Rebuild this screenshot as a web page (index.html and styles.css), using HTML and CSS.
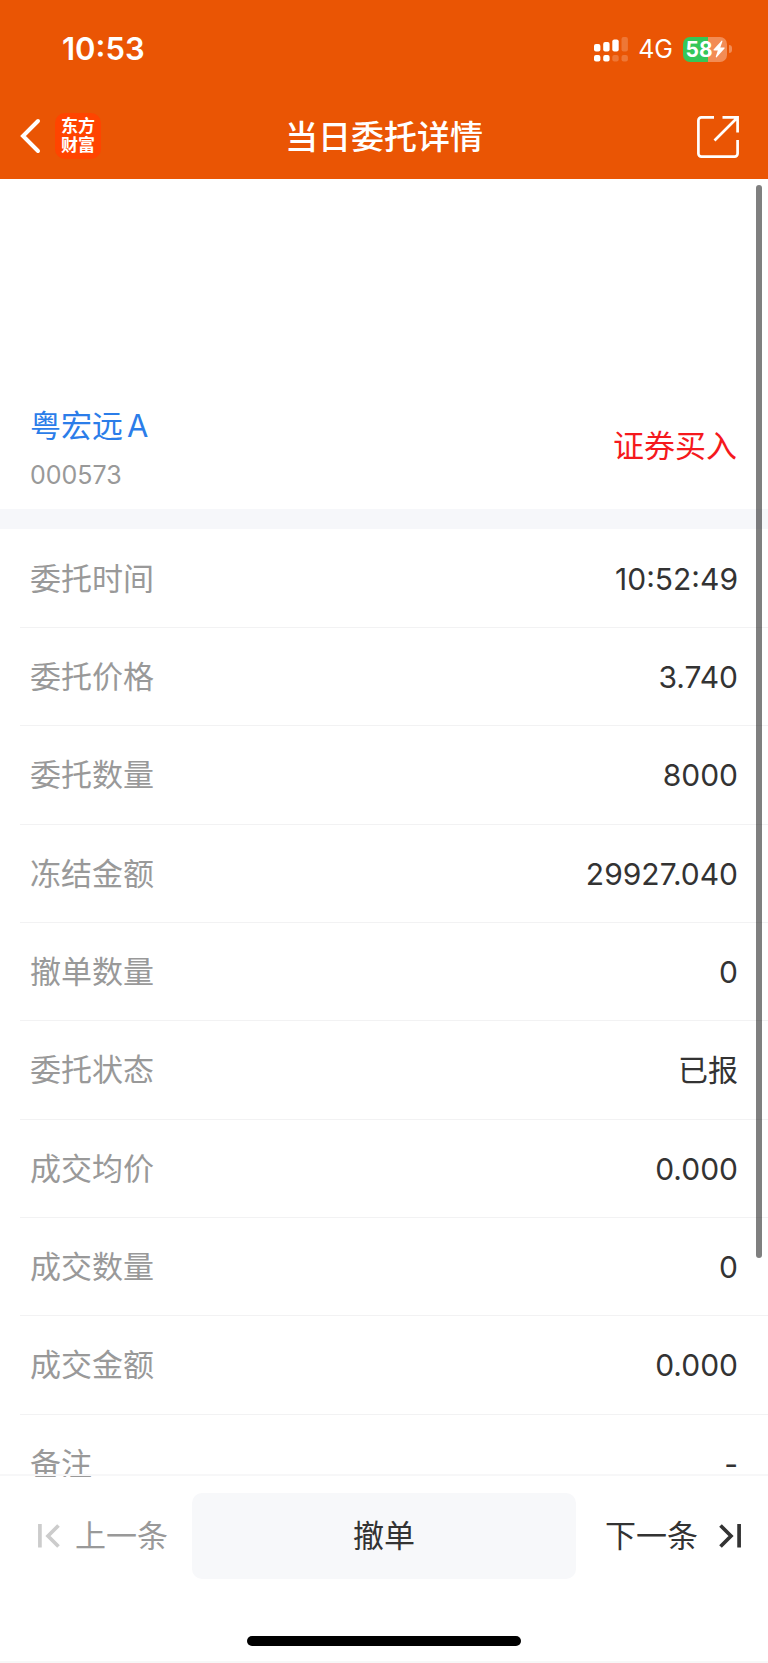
FILE: index.html
```html
<!DOCTYPE html>
<html lang="zh-CN">
<head>
<meta charset="utf-8">
<meta name="viewport" content="width=device-width, initial-scale=1">
<title>当日委托详情</title>
<link rel="stylesheet" href="styles.css">
</head>
<body>
<header class="header">
  <div class="status">
    <time class="clock">10:53</time>
    <div class="status-right">
      <svg class="signal" width="34" height="25" viewBox="0 0 34 25" fill="#fff" aria-hidden="true">
        <rect x="0" y="7" width="6.4" height="7.5" rx="2"/><rect x="9.2" y="5" width="6.4" height="9.5" rx="2"/><rect x="18.3" y="2.5" width="6.4" height="12" rx="2"/><rect x="27.5" y="0" width="6.4" height="14.5" rx="2" opacity=".2"/>
        <rect x="0" y="18" width="6.4" height="6.4" rx="2"/><rect x="9.2" y="18" width="6.4" height="6.4" rx="2"/><rect x="18.3" y="18" width="6.4" height="6.4" rx="2" opacity=".2"/><rect x="27.5" y="18" width="6.4" height="6.4" rx="2" opacity=".2"/>
      </svg>
      <span class="network">4G</span>
      <span class="battery">
        <span class="cell"><span class="level">58</span><svg width="12" height="18" viewBox="0 0 12 18" fill="#fff" aria-hidden="true"><path d="M8.6.8.6 9.6c-.3.4-.1.8.3.8h3.9L2.8 16.600c-.2.8.4 1.100.9.6l7.800-8.800c.3-.4.1-.9-.4-.9H7.300l2.100-6c.2-.7-.4-1.200-.8-.7Z"/></svg></span>
        <span class="nub"></span>
      </span>
    </div>
  </div>
  <nav class="navbar">
    <div class="nav-left">
      <button class="icon-btn" aria-label="返回"><svg width="22" height="36" viewBox="0 0 22 36" fill="none" stroke="#fff" stroke-width="4" stroke-linecap="round" stroke-linejoin="miter" aria-hidden="true"><path d="M19 3 4 18l15 15"/></svg></button>
      <span class="logo"><span>东方</span><span>财富</span></span>
    </div>
    <h1 class="title">当日委托详情</h1>
    <button class="icon-btn share" aria-label="分享"><svg width="42" height="42" viewBox="0 0 42 42" fill="none" stroke="#fff" stroke-width="2.700" aria-hidden="true"><path d="M17 1.400H4.400a3 3 0 0 0-3 3v33.200a3 3 0 0 0 3 3h33.200a3 3 0 0 0 3-3V24M25.500 1.400h15.100V16.500M40 2 17.500 24.500"/></svg></button>
  </nav>
</header>
<main class="content">
  <section class="stock">
    <div>
      <a class="stock-name" href="#"><span>粤宏远</span> <span>A</span></a>
      <p class="stock-code">000573</p>
    </div>
    <strong class="side">证券买入</strong>
  </section>
  <dl class="details">
    <div class="row"><dt>委托时间</dt><dd>10:52:49</dd></div>
    <div class="row"><dt>委托价格</dt><dd>3.740</dd></div>
    <div class="row"><dt>委托数量</dt><dd>8000</dd></div>
    <div class="row"><dt>冻结金额</dt><dd>29927.040</dd></div>
    <div class="row"><dt>撤单数量</dt><dd>0</dd></div>
    <div class="row"><dt>委托状态</dt><dd>已报</dd></div>
    <div class="row"><dt>成交均价</dt><dd>0.000</dd></div>
    <div class="row"><dt>成交数量</dt><dd>0</dd></div>
    <div class="row"><dt>成交金额</dt><dd>0.000</dd></div>
    <div class="row"><dt>备注</dt><dd>-</dd></div>
  </dl>
  <div class="scrollbar"></div>
</main>
<footer class="footer">
  <div class="actions">
    <button class="step" disabled><svg width="22" height="24" viewBox="0 0 22 24" fill="none" stroke="#ccc" stroke-width="3.700" aria-hidden="true"><path d="M1.900 0v23.500M20.500 1.500 10 12l10.500 10.500"/></svg><span>上一条</span></button>
    <button class="cancel">撤单</button>
    <button class="step next"><span>下一条</span><svg width="22" height="24" viewBox="0 0 22 24" fill="none" stroke="#333" stroke-width="3.700" aria-hidden="true"><path d="M20.100 0v23.500M1.500 1.500 12 12 1.500 22.500"/></svg></button>
  </div>
  <div class="home"></div>
</footer>
</body>
</html>
```
FILE: styles.css
```css
* { box-sizing: border-box; margin: 0; padding: 0; }
body {
  display: flex;
  flex-direction: column;
  height: 100vh;
  background: #fff;
  color: #333;
  font-family: Inter, "Noto Sans CJK SC", sans-serif;
  font-size: 31px;
  line-height: 44px;
}
button { border: 0; background: none; font: inherit; color: inherit; cursor: pointer; }
svg { display: block; flex: none; }

.header { flex: none; background: #ea5504; color: #fff; }
.status {
  display: flex;
  justify-content: space-between;
  align-items: center;
  padding: 27px 36px 21px 62px;
}
.clock { font-weight: 600; }
.status-right { display: flex; align-items: center; }
.network { margin: 0 10px; font-size: 25px; }
.battery { display: flex; align-items: center; gap: 2px; }
.cell {
  display: flex;
  align-items: center;
  justify-content: center;
  width: 44px;
  height: 25px;
  border-radius: 7px;
  background: linear-gradient(to right, #34c759 57%, #f28c55 57%);
}
.level { font-size: 21px; font-weight: 700; line-height: 25px; }
.nub { width: 3px; height: 8px; border-radius: 0 4px 4px 0; background: #f28c55; }

.navbar {
  display: grid;
  grid-template-columns: 1fr auto 1fr;
  align-items: center;
  height: 87px;
  padding: 0 19px;
}
.nav-left { display: flex; align-items: center; gap: 14px; }
.icon-btn { display: block; }
.share { justify-self: end; padding: 2px 10px 0 0; }
.logo {
  display: flex;
  flex-direction: column;
  align-items: center;
  justify-content: center;
  width: 46px;
  height: 46px;
  border-radius: 10px;
  background: #ff4400;
  font-size: 17px;
  font-weight: 700;
  line-height: 19px;
}
.title { padding-top: 2px; font-size: 33px; font-weight: 500; }

.content { position: relative; flex: 1; min-height: 0; overflow: hidden; }
.stock {
  display: flex;
  justify-content: space-between;
  align-items: center;
  padding: 225px 31px 12px 30px;
}
.stock-name { display: flex; gap: 4px; color: #2b7de9; text-decoration: none; }
.stock-code { margin-top: 5px; color: #999; font-size: 25px; }
.side { margin-bottom: 10px; color: #f5191d; font-weight: 400; }

.details { padding-top: 1px; border-top: 20px solid #f6f7fa; }
.row {
  display: flex;
  justify-content: space-between;
  align-items: center;
  height: 98px;
  margin-left: 20px;
  padding: 0 30px 0 10px;
  border-bottom: 1px solid #f2f2f3;
}
.row:nth-child(3n) { height: 99px; }
dt { color: #999; }
dd { font-size: 30px; }
.scrollbar {
  position: absolute;
  top: 6px;
  right: 6px;
  bottom: 219px;
  width: 6px;
  border-radius: 3px;
  background: rgba(0, 0, 0, .5);
}

.footer { position: relative; flex: none; border-bottom: 2px solid #f7f7f7; }
.footer::before {
  content: "";
  position: absolute;
  top: -3px;
  left: 0;
  right: 0;
  height: 2px;
  background: #f7f7f8;
}
.actions {
  display: grid;
  grid-template-columns: 1fr 2fr 1fr;
  align-items: center;
  padding-top: 16px;
}
.step { display: flex; align-items: center; gap: 15px; padding-left: 38px; }
.step:disabled { color: #999; cursor: default; }
.next { justify-content: flex-end; gap: 21px; padding: 0 27px 0 0; }
.cancel { height: 86px; border-radius: 10px; background: #f7f8fa; }
.home { width: 274px; height: 10px; margin: 57px auto 15px; border-radius: 5px; background: #000; }
```
